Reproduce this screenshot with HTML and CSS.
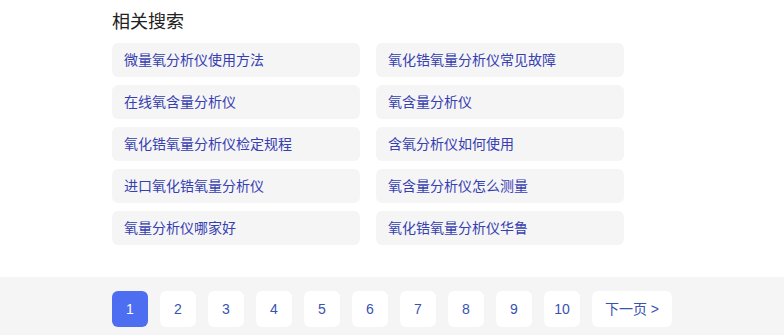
FILE: index.html
```html
<!DOCTYPE html>
<html lang="zh-CN">
<head>
  <meta charset="UTF-8">
  <meta name="viewport" content="width=device-width, initial-scale=1.0">
  <title>相关搜索</title>
  <link rel="stylesheet" href="styles.css">
</head>
<body>
  <div class="related">
    <h3 class="related-title">相关搜索</h3>
    <div class="related-grid">
      <a class="related-item" href="#">微量氧分析仪使用方法</a>
      <a class="related-item" href="#">氧化锆氧量分析仪常见故障</a>
      <a class="related-item" href="#">在线氧含量分析仪</a>
      <a class="related-item" href="#">氧含量分析仪</a>
      <a class="related-item" href="#">氧化锆氧量分析仪检定规程</a>
      <a class="related-item" href="#">含氧分析仪如何使用</a>
      <a class="related-item" href="#">进口氧化锆氧量分析仪</a>
      <a class="related-item" href="#">氧含量分析仪怎么测量</a>
      <a class="related-item" href="#">氧量分析仪哪家好</a>
      <a class="related-item" href="#">氧化锆氧量分析仪华鲁</a>
    </div>
  </div>

  <div class="pager">
    <span class="page active">1</span>
    <a class="page" href="#">2</a>
    <a class="page" href="#">3</a>
    <a class="page" href="#">4</a>
    <a class="page" href="#">5</a>
    <a class="page" href="#">6</a>
    <a class="page" href="#">7</a>
    <a class="page" href="#">8</a>
    <a class="page" href="#">9</a>
    <a class="page" href="#">10</a>
    <a class="page next" href="#">下一页 &gt;</a>
  </div>
</body>
</html>
```

FILE: styles.css
```css
body {
  margin: 0;
  padding: 0;
  background-color: #fff;
  font-family: "Liberation Sans", "Noto Sans CJK SC", sans-serif;
}

.related {
  padding: 10px 0 0 112px;
}

.related-title {
  margin: 0 0 9px;
  font-size: 18px;
  line-height: 24px;
  font-weight: normal;
  color: #222;
}

.related-grid {
  display: grid;
  grid-template-columns: 248px 248px;
  gap: 8px 16px;
}

.related-item {
  display: block;
  height: 34px;
  line-height: 34px;
  padding: 0 12px;
  border-radius: 6px;
  background-color: #f5f5f6;
  color: #3640b0;
  font-size: 14px;
  text-decoration: none;
}

.pager {
  margin-top: 32px;
  height: 58px;
  box-sizing: border-box;
  padding: 14px 0 0 112px;
  background-color: #f5f5f6;
  display: flex;
  gap: 12px;
}

.page {
  width: 36px;
  height: 36px;
  line-height: 36px;
  text-align: center;
  border-radius: 6px;
  background-color: #fff;
  color: #3951b2;
  font-size: 14px;
  text-decoration: none;
}

.page.active {
  background-color: #4e6ef2;
  color: #fff;
}

.page.next {
  width: 80px;
}
```
